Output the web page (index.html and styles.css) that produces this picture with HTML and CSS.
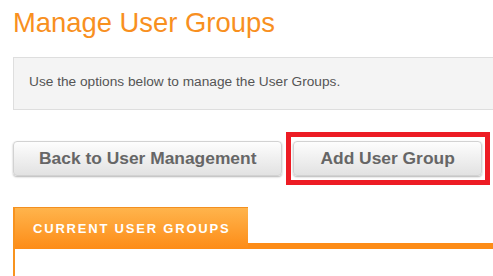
FILE: index.html
```html
<!DOCTYPE html>
<html lang="en">
<head>
  <meta charset="UTF-8">
  <meta name="viewport" content="width=device-width, initial-scale=1.0">
  <title>Manage User Groups</title>
  <link rel="stylesheet" href="styles.css">
</head>
<body>
  <div class="page">
    <h1>Manage User Groups</h1>

    <div class="info-box">
      Use the options below to manage the User Groups.
    </div>

    <div class="actions">
      <button class="btn">Back to User Management</button>
      <button class="btn highlight">Add User Group</button>
    </div>

    <!-- lista de grupos -->
    <div class="panel">
      <div class="panel-header">
        <div class="tab">Current User Groups</div>
        <div class="tab-bar"></div>
      </div>
      <div class="panel-body"></div>
    </div>
  </div>
</body>
</html>
```

FILE: styles.css
```css
html, body {
  margin: 0;
  overflow: hidden;
}
body {
  font-family: "Liberation Sans", Arial, sans-serif;
  background: #fff;
}
.page {
  padding: 7px 0 0 13px;
}
h1 {
  margin: 0;
  font-size: 27.4px;
  font-weight: normal;
  line-height: 31px;
  color: #f8901f;
}
.info-box {
  margin-top: 19px;
  background: #f4f4f4;
  border: 1px solid #dedede;
  border-right: none;
  padding: 14px 15px 17px;
  font-size: 13.7px;
  line-height: 20px;
  color: #555;
}
.actions {
  display: flex;
  gap: 11px;
  margin-top: 31px;
}
.btn {
  height: 35px;
  padding: 0 25px;
  font-family: "Liberation Sans", Arial, sans-serif;
  font-size: 17.4px;
  font-weight: bold;
  color: #666;
  background: linear-gradient(#fdfdfd, #e2e2e2);
  border: 1px solid #d2d2d2;
  border-radius: 4px;
  box-shadow: 0 1px 2px rgba(0, 0, 0, 0.3);
  cursor: pointer;
}
.btn.highlight {
  position: relative;
  padding: 0 26px;
}
.btn.highlight::after {
  content: "";
  position: absolute;
  top: -10px;
  left: -8px;
  right: -9px;
  bottom: -10px;
  border: 5px solid #ed1c24;
}
.panel {
  margin-top: 31px;
  border-left: 2px solid #f8931f;
  height: 80px;
}
.panel-header {
  display: flex;
  align-items: flex-end;
}
.tab {
  height: 40px;
  padding: 1px 18px 0 18px;
  border-top: 1px solid #f39020;
  background: linear-gradient(#ffb44c, #fd8c17);
  color: #fff;
  font-size: 13px;
  font-weight: bold;
  line-height: 40px;
  letter-spacing: 1.8px;
  text-transform: uppercase;
}
.tab-bar {
  flex: 1;
  height: 6px;
  background: #fd8c17;
}
```
